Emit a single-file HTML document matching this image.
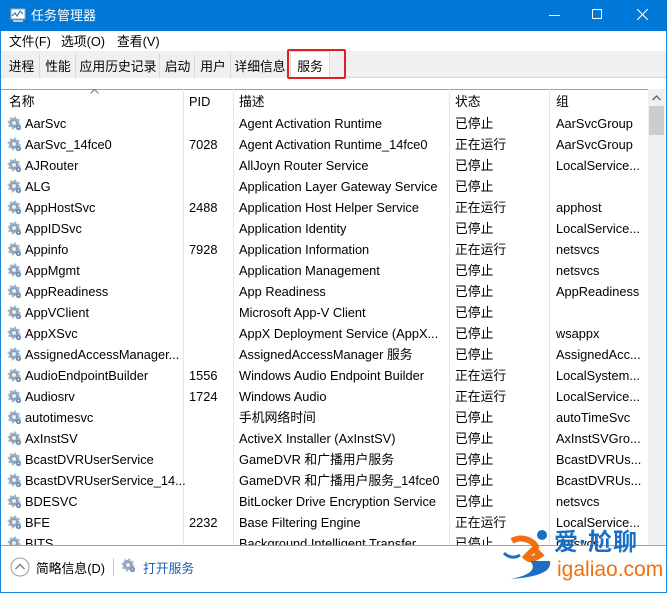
<!DOCTYPE html>
<html><head><meta charset="utf-8"><style>
*{margin:0;padding:0;box-sizing:border-box}
body{width:667px;height:593px;overflow:hidden;background:#fff;font-family:"Liberation Sans","Noto Sans CJK SC",sans-serif;font-size:12.8px;line-height:15px;color:#000;position:relative}
.win{position:absolute;left:0;top:0;width:667px;height:593px;border:1px solid #1883d7;border-top:none}
.title{position:absolute;left:0;top:0;width:667px;height:31px;background:#0078d7;color:#fff;font-size:13px}
.title .t{position:absolute;left:31px;top:8px}
.menu{position:absolute;top:31px;left:1px;right:1px;height:20px;background:#fff}
.menu span{position:absolute;top:3px}
.tabs{position:absolute;top:51px;left:1px;right:1px;height:27px;background:#f0f0f0;border-bottom:1px solid #d9d9d9}
.tab{position:absolute;top:3px;height:24px;background:#f0f0f0;border-right:1px solid #d9d9d9;padding:5px 0 0 0;text-align:center}
.hdr{position:absolute;top:89px;left:1px;width:647px;height:23px;border-top:1px solid #a0a0a0;background:#fff}
.hdr span{position:absolute;top:4px;color:#000}
.sep{position:absolute;top:89px;width:1px;height:457px;background:#e5e5e5}
.rows{position:absolute;top:112px;left:1px;width:647px;height:433px;overflow:hidden}
.r{position:relative;height:21px;white-space:nowrap}
.r span{position:absolute;top:4px;line-height:15px}
.c1{left:24px}.c2{left:188px}.c3{left:238px}.c4{left:454px}.c5{left:555px}
.g{position:absolute;left:6px;top:4px;width:15px;height:15px}
.sb{position:absolute;left:648px;top:89px;width:17px;height:457px;background:#f0f0f0}
.foot{position:absolute;top:545px;left:1px;right:1px;height:47px;border-top:1px solid #a0a0a0;background:#fff}
</style></head><body>
<svg width="0" height="0" style="position:absolute"><defs>
<g id="gear"><circle cx="7" cy="7" r="5" fill="#8aa0b8"/><circle cx="7" cy="7" r="5" fill="none" stroke="#a8b8c8" stroke-width="3" stroke-dasharray="2 1.9"/><circle cx="7" cy="7" r="2" fill="#e8eef4"/><circle cx="11.5" cy="11.5" r="2.6" fill="#6d8aa8"/><circle cx="11.5" cy="11.5" r="1" fill="#dde"/></g>
</defs></svg>
<div class="win"></div>
<div class="title">
<svg style="position:absolute;left:10px;top:8px" width="16" height="15"><rect x="1" y="1" width="14" height="10" fill="#fff" stroke="#9ab"/><polyline points="2,8 5,5 7,8 10,3 13,6" fill="none" stroke="#2a7bd0" stroke-width="1.2"/><rect x="3" y="12" width="10" height="2" fill="#bcd"/></svg>
<span class="t">任务管理器</span>
<div style="position:absolute;left:549px;top:15px;width:11px;height:1px;background:#fff"></div>
<div style="position:absolute;left:592px;top:9px;width:10px;height:10px;border:1px solid #fff"></div>
<svg style="position:absolute;left:637px;top:9px" width="11" height="11"><path d="M0 0L11 11M11 0L0 11" stroke="#fff" stroke-width="1.1"/></svg>
</div>
<div class="menu"><span style="left:8px">文件(F)</span><span style="left:60px">选项(O)</span><span style="left:116px">查看(V)</span></div>
<div class="tabs">
<div class="tab" style="left:3px;width:36px">进程</div>
<div class="tab" style="left:40px;width:35px">性能</div>
<div class="tab" style="left:76px;width:83px">应用历史记录</div>
<div class="tab" style="left:160px;width:34px">启动</div>
<div class="tab" style="left:195px;width:35px">用户</div>
<div class="tab" style="left:231px;width:56px;border-right:none">详细信息</div>
<div class="tab" style="left:289px;top:0;height:28px;width:40px;background:#fff;border:1px solid #d9d9d9;border-bottom:none;padding-top:7px">服务</div>
</div>
<div style="position:absolute;left:287px;top:49px;width:59px;height:30px;border:2px solid #e02020;border-radius:2px"></div>
<div class="hdr"><span style="left:8px">名称</span><span style="left:188px">PID</span><span style="left:238px">描述</span><span style="left:454px">状态</span><span style="left:555px">组</span>
<svg style="position:absolute;left:89px;top:-1px" width="9" height="5"><path d="M0.5 4.5L4.5 0.5L8.5 4.5" fill="none" stroke="#777"/></svg></div>
<div class="sep" style="left:183px"></div><div class="sep" style="left:233px"></div><div class="sep" style="left:449px"></div><div class="sep" style="left:549px"></div>
<div class="rows">
<div class="r"><svg class="g"><use href="#gear"/></svg><span class="c1">AarSvc</span><span class="c3">Agent Activation Runtime</span><span class="c4">已停止</span><span class="c5">AarSvcGroup</span></div>
<div class="r"><svg class="g"><use href="#gear"/></svg><span class="c1">AarSvc_14fce0</span><span class="c2">7028</span><span class="c3">Agent Activation Runtime_14fce0</span><span class="c4">正在运行</span><span class="c5">AarSvcGroup</span></div>
<div class="r"><svg class="g"><use href="#gear"/></svg><span class="c1">AJRouter</span><span class="c3">AllJoyn Router Service</span><span class="c4">已停止</span><span class="c5">LocalService...</span></div>
<div class="r"><svg class="g"><use href="#gear"/></svg><span class="c1">ALG</span><span class="c3">Application Layer Gateway Service</span><span class="c4">已停止</span></div>
<div class="r"><svg class="g"><use href="#gear"/></svg><span class="c1">AppHostSvc</span><span class="c2">2488</span><span class="c3">Application Host Helper Service</span><span class="c4">正在运行</span><span class="c5">apphost</span></div>
<div class="r"><svg class="g"><use href="#gear"/></svg><span class="c1">AppIDSvc</span><span class="c3">Application Identity</span><span class="c4">已停止</span><span class="c5">LocalService...</span></div>
<div class="r"><svg class="g"><use href="#gear"/></svg><span class="c1">Appinfo</span><span class="c2">7928</span><span class="c3">Application Information</span><span class="c4">正在运行</span><span class="c5">netsvcs</span></div>
<div class="r"><svg class="g"><use href="#gear"/></svg><span class="c1">AppMgmt</span><span class="c3">Application Management</span><span class="c4">已停止</span><span class="c5">netsvcs</span></div>
<div class="r"><svg class="g"><use href="#gear"/></svg><span class="c1">AppReadiness</span><span class="c3">App Readiness</span><span class="c4">已停止</span><span class="c5">AppReadiness</span></div>
<div class="r"><svg class="g"><use href="#gear"/></svg><span class="c1">AppVClient</span><span class="c3">Microsoft App-V Client</span><span class="c4">已停止</span></div>
<div class="r"><svg class="g"><use href="#gear"/></svg><span class="c1">AppXSvc</span><span class="c3">AppX Deployment Service (AppX...</span><span class="c4">已停止</span><span class="c5">wsappx</span></div>
<div class="r"><svg class="g"><use href="#gear"/></svg><span class="c1">AssignedAccessManager...</span><span class="c3">AssignedAccessManager 服务</span><span class="c4">已停止</span><span class="c5">AssignedAcc...</span></div>
<div class="r"><svg class="g"><use href="#gear"/></svg><span class="c1">AudioEndpointBuilder</span><span class="c2">1556</span><span class="c3">Windows Audio Endpoint Builder</span><span class="c4">正在运行</span><span class="c5">LocalSystem...</span></div>
<div class="r"><svg class="g"><use href="#gear"/></svg><span class="c1">Audiosrv</span><span class="c2">1724</span><span class="c3">Windows Audio</span><span class="c4">正在运行</span><span class="c5">LocalService...</span></div>
<div class="r"><svg class="g"><use href="#gear"/></svg><span class="c1">autotimesvc</span><span class="c3">手机网络时间</span><span class="c4">已停止</span><span class="c5">autoTimeSvc</span></div>
<div class="r"><svg class="g"><use href="#gear"/></svg><span class="c1">AxInstSV</span><span class="c3">ActiveX Installer (AxInstSV)</span><span class="c4">已停止</span><span class="c5">AxInstSVGro...</span></div>
<div class="r"><svg class="g"><use href="#gear"/></svg><span class="c1">BcastDVRUserService</span><span class="c3">GameDVR 和广播用户服务</span><span class="c4">已停止</span><span class="c5">BcastDVRUs...</span></div>
<div class="r"><svg class="g"><use href="#gear"/></svg><span class="c1">BcastDVRUserService_14...</span><span class="c3">GameDVR 和广播用户服务_14fce0</span><span class="c4">已停止</span><span class="c5">BcastDVRUs...</span></div>
<div class="r"><svg class="g"><use href="#gear"/></svg><span class="c1">BDESVC</span><span class="c3">BitLocker Drive Encryption Service</span><span class="c4">已停止</span><span class="c5">netsvcs</span></div>
<div class="r"><svg class="g"><use href="#gear"/></svg><span class="c1">BFE</span><span class="c2">2232</span><span class="c3">Base Filtering Engine</span><span class="c4">正在运行</span><span class="c5">LocalService...</span></div>
<div class="r"><svg class="g"><use href="#gear"/></svg><span class="c1">BITS</span><span class="c3">Background Intelligent Transfer...</span><span class="c4">已停止</span><span class="c5">netsvcs</span></div>
</div>
<div class="sb"><svg style="position:absolute;left:4px;top:6px" width="9" height="6"><path d="M0.5 5L4.5 1L8.5 5" fill="none" stroke="#606060" stroke-width="1.3"/></svg><div style="position:absolute;left:1px;top:17px;width:15px;height:29px;background:#cdcdcd"></div></div>
<div class="foot">
<svg style="position:absolute;left:9px;top:11px" width="20" height="20"><circle cx="10" cy="10" r="9" fill="none" stroke="#999"/><path d="M5.5 12L10 7.5L14.5 12" fill="none" stroke="#666" stroke-width="1.2"/></svg>
<span style="position:absolute;left:35px;top:15px">简略信息(D)</span>
<div style="position:absolute;left:112px;top:12px;width:1px;height:18px;background:#ccc"></div>
<svg style="position:absolute;left:120px;top:12px;width:17px;height:17px"><use href="#gear"/></svg>
<span style="position:absolute;left:142px;top:15px;color:#1a5fb4">打开服务</span>
</div>
<div style="position:absolute;left:500px;top:527px;width:160px;height:60px;line-height:normal">
<svg style="position:absolute;left:0;top:0" width="70" height="56"><circle cx="42" cy="8" r="5" fill="#1a6fc2"/><path d="M12 14C22 8 34 14 36 20L26 30C30 34 34 32 40 28L34 22" fill="none" stroke="#f07010" stroke-width="6"/><path d="M4 26C8 30 14 32 20 28" fill="none" stroke="#1a6fc2" stroke-width="3"/><path d="M30 34C36 40 34 48 10 52C40 50 52 44 50 34" fill="#1a6fc2"/></svg>
<span style="position:absolute;left:54px;top:2px;font-size:24px;line-height:28px;color:#1a6fc2;font-weight:bold;letter-spacing:1px">爱·尬聊</span>
<span style="position:absolute;left:57px;top:31px;font-size:21px;line-height:24px;color:#f07010">igaliao.com</span>
</div>
</body></html>
